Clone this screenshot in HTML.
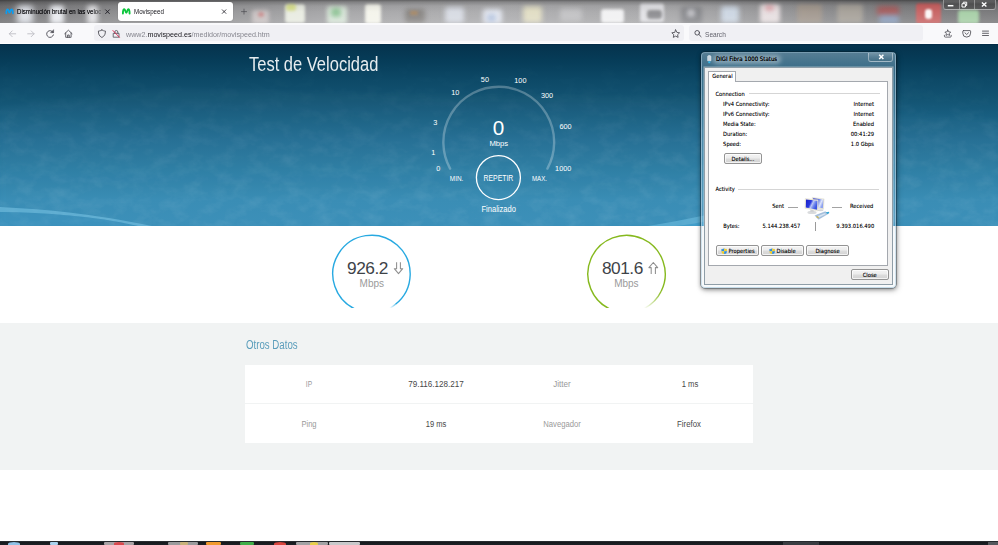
<!DOCTYPE html>
<html lang="es">
<head>
<meta charset="utf-8">
<title>Movispeed</title>
<style>
*{box-sizing:border-box;margin:0;padding:0}
html,body{width:998px;height:545px;overflow:hidden;background:#fff;font-family:"Liberation Sans",sans-serif;}
.abs{position:absolute}
#root{position:relative;width:998px;height:545px;overflow:hidden}
/* ---------- browser chrome ---------- */
#tabbar{position:absolute;left:0;top:0;width:998px;height:23px;
 background:linear-gradient(90deg,#6e6e70 0,#7c7c7e 40px,#8a8a8c 120px,#969698 230px,#a4a4a6 330px,#acacae 500px,#a6a6a8 680px,#949496 780px,#808082 880px,#767678 998px);}
#tabshade{position:absolute;left:0;top:0;width:998px;height:23px;background:linear-gradient(180deg,rgba(0,0,0,.42) 0,rgba(0,0,0,.22) 2px,rgba(0,0,0,.05) 6px,rgba(255,255,255,.04) 12px,rgba(255,255,255,.16) 23px)}
.tab{position:absolute;top:2px;height:19px;border-radius:3px;font-size:7px;line-height:19px;color:#15141a;white-space:nowrap;overflow:hidden}
#tab1{left:3px;width:112px;}
#tab2{left:118px;width:115px;background:#fff;box-shadow:0 0 1px rgba(0,0,0,.35)}
#navbar{position:absolute;left:0;top:23px;width:998px;height:21px;background:#f9f9fb;border-bottom:1.400px solid #fff}
#urlbar{position:absolute;left:94px;top:25px;width:590px;height:16px;border-radius:3px;background:#f0f0f4}
#searchbar{position:absolute;left:689px;top:25px;width:234px;height:16px;border-radius:3px;background:#f0f0f4}
.ct{position:absolute;white-space:nowrap;line-height:11px;transform-origin:0 50%;z-index:3}
#wctl{position:absolute;left:943px;top:0;width:53px;height:9.500px;border:1px solid rgba(255,255,255,.35);border-top:0;border-radius:0 0 3px 3px;background:linear-gradient(180deg,rgba(255,255,255,.12),rgba(40,40,40,.4) 45%,rgba(30,30,30,.35))}
#wctl i{position:absolute;top:0;width:1px;height:8.500px;background:rgba(255,255,255,.35)}
#tabblobs i{position:absolute;border-radius:3px}
#tabblobs{position:absolute;left:0;top:0;width:998px;height:23px;overflow:hidden}
.navtxt{position:absolute;font-size:7px;line-height:16px;white-space:nowrap;color:#15141a}
/* ---------- page ---------- */
#hero{position:absolute;left:0;top:44px;width:998px;height:182px;
 background:linear-gradient(180deg,#05324c 0,#063c58 8.8%,#0d4967 19.8%,#135473 30.8%,#196184 41.8%,#226d93 52.7%,#2e81a8 74.7%,#368bb4 85.7%,#388eb8 100%);overflow:hidden;box-shadow:inset 0 1px 0 #032b47}
#sec1{position:absolute;left:0;top:226px;width:998px;height:97px;background:#fff}
#sec2{position:absolute;left:0;top:323px;width:998px;height:148px;background:#f1f3f3}
#sec3{position:absolute;left:0;top:470.400px;width:998px;height:71px;background:#fff}
#taskbar{position:absolute;left:0;top:541px;width:998px;height:4px;background:linear-gradient(180deg,#3a3d42 0,#15181c 1px,#1d2126 100%);overflow:hidden}
#taskbar i{position:absolute;top:1px;height:3px}
.w{color:#fff;position:absolute;white-space:nowrap;transform:translate(-50%,-50%);line-height:1}
.g{position:absolute;white-space:nowrap;transform:translate(-50%,-50%);line-height:1}
#table{position:absolute;left:245px;top:364.500px;width:507.800px;height:78.500px;background:#fff}
#table .sep{position:absolute;left:0;top:38.700px;width:507.800px;height:1px;background:#f1f3f3}
/* ---------- dialog ---------- */
#dlg{position:absolute;left:701px;top:51.600px;width:195.300px;height:236.900px;border-radius:4px;border:1px solid rgba(185,212,228,.6);
 background:linear-gradient(180deg,rgba(150,190,215,.34) 0,rgba(150,190,215,.30) 168px,rgba(170,200,220,.13) 176px,rgba(170,200,220,.10) 100%);
 box-shadow:0 0 0 .6px rgba(10,25,38,.55),0 1px 4px rgba(0,0,0,.4),1px 2px 6px rgba(0,0,0,.25)}
#dlgsheen{position:absolute;left:702px;top:53px;width:193px;height:13px;border-radius:3px 3px 0 0;background:linear-gradient(180deg,rgba(255,255,255,.16),rgba(255,255,255,.04))}
#client{position:absolute;left:704.400px;top:66.500px;width:188.500px;height:218.400px;background:#f0f0f0;border:1px solid rgba(45,75,95,.5);box-shadow:0 0 0 .7px rgba(255,255,255,.35)}
#tabpage{position:absolute;left:708.100px;top:81.300px;width:180.300px;height:184.500px;background:#fff;border:1px solid #a4a8ae}
#gtab{position:absolute;left:708.100px;top:70.900px;width:27.600px;height:11.400px;background:#fff;border:1px solid #a4a8ae;border-bottom:0}
#closebtn{position:absolute;left:868px;top:52.500px;width:25px;height:9.500px;border:1px solid rgba(255,255,255,.4);border-top:0;border-radius:0 0 3px 3px;background:linear-gradient(180deg,rgba(255,255,255,.18),rgba(255,255,255,.05) 50%,rgba(0,0,0,.05))}
#tglow{position:absolute;left:713px;top:55px;width:68px;height:8.500px;border-radius:5px;background:rgba(255,255,255,.34);filter:blur(2.200px)}
.hl{position:absolute;height:1px;background:#d5d5d5}
.sh{display:inline-block;vertical-align:-1.600px;margin-right:1.300px}
.d{position:absolute;font-family:"DejaVu Sans Condensed","DejaVu Sans","Liberation Sans",sans-serif;font-size:5.750px;line-height:8px;color:#000;white-space:nowrap;text-shadow:0 0 .3px rgba(0,0,0,.4)}
.r{text-align:right}
.btn{position:absolute;height:11px;border:1px solid #949494;text-shadow:0 0 .3px rgba(0,0,0,.4);border-radius:2px;background:linear-gradient(180deg,#f4f4f4 0,#ececec 48%,#dddddd 52%,#d2d2d2 100%);box-shadow:0 0 0 1px rgba(255,255,255,.7) inset;
 font-family:"DejaVu Sans Condensed","DejaVu Sans","Liberation Sans",sans-serif;font-size:5.750px;line-height:11.200px;text-align:center;color:#000;white-space:nowrap}
</style>
</head>
<body>
<div id="root">

<!-- browser chrome -->
<div id="tabbar"></div>
<div id="tabblobs"><i style="left:17px;top:5px;width:16px;height:19px;background:rgba(240,243,250,.85);filter:blur(3px)"></i><i style="left:50px;top:5px;width:14px;height:19px;background:rgba(245,247,252,.9);filter:blur(2.5px)"></i><i style="left:87px;top:5px;width:11px;height:19px;background:rgba(245,245,248,.8);filter:blur(2.5px)"></i><i style="left:252px;top:10px;width:17px;height:14px;background:rgba(215,205,205,.75);filter:blur(2px)"></i><i style="left:258px;top:12px;width:6px;height:5px;background:rgba(200,90,90,.5);filter:blur(1.5px)"></i><i style="left:285px;top:4px;width:20px;height:19px;background:rgba(240,243,232,.9);filter:blur(1.6px)"></i><i style="left:286px;top:4px;width:10px;height:7px;background:rgba(205,215,90,.6);filter:blur(1.5px)"></i><i style="left:327px;top:6px;width:20px;height:18px;background:rgba(225,240,225,.85);filter:blur(2px)"></i><i style="left:331px;top:8px;width:10px;height:9px;background:rgba(90,170,100,.55);filter:blur(2px)"></i><i style="left:365px;top:4px;width:16px;height:20px;background:rgba(248,248,238,.95);filter:blur(1.6px)"></i><i style="left:405px;top:9px;width:20px;height:14px;background:rgba(105,100,95,.55);filter:blur(2.5px)"></i><i style="left:410px;top:11px;width:8px;height:4px;background:rgba(210,140,60,.45);filter:blur(1.5px)"></i><i style="left:445px;top:7px;width:19px;height:16px;background:rgba(225,230,240,.8);filter:blur(2.5px)"></i><i style="left:483px;top:9px;width:19px;height:15px;background:rgba(235,240,250,.85);filter:blur(2.5px)"></i><i style="left:487px;top:14px;width:9px;height:8px;background:rgba(120,150,200,.4);filter:blur(2px)"></i><i style="left:523px;top:6px;width:19px;height:17px;background:rgba(238,232,200,.8);filter:blur(2.5px)"></i><i style="left:560px;top:8px;width:22px;height:13px;background:rgba(215,215,218,.5);filter:blur(2.5px)"></i><i style="left:601px;top:9px;width:23px;height:14px;background:rgba(248,248,250,.9);filter:blur(1.6px)"></i><i style="left:640px;top:3px;width:24px;height:19px;background:rgba(235,235,238,.85);filter:blur(1.6px)"></i><i style="left:647px;top:10px;width:15px;height:9px;background:rgba(70,70,72,.55);filter:blur(1.6px)"></i><i style="left:681px;top:7px;width:21px;height:17px;background:rgba(100,102,108,.5);filter:blur(2.5px)"></i><i style="left:687px;top:9px;width:8px;height:8px;background:rgba(230,230,235,.6);filter:blur(2px)"></i><i style="left:721px;top:6px;width:18px;height:17px;background:rgba(215,228,242,.8);filter:blur(2.5px)"></i><i style="left:760px;top:4px;width:20px;height:19px;background:rgba(245,235,236,.85);filter:blur(2px)"></i><i style="left:765px;top:5px;width:9px;height:6px;background:rgba(215,120,130,.5);filter:blur(2px)"></i><i style="left:797px;top:4px;width:25px;height:19px;background:rgba(165,152,140,.8);filter:blur(2px)"></i><i style="left:837px;top:4px;width:26px;height:19px;background:rgba(172,166,156,.8);filter:blur(2px)"></i><i style="left:877px;top:6px;width:22px;height:10px;background:rgba(190,70,70,.6);filter:blur(2.5px)"></i><i style="left:879px;top:15px;width:20px;height:9px;background:rgba(140,170,215,.65);filter:blur(2.5px)"></i><i style="left:916px;top:3px;width:25px;height:21px;background:rgba(205,95,95,.92);filter:blur(1.3px)"></i><i style="left:925px;top:9px;width:7px;height:10px;background:rgba(255,255,255,.95);filter:blur(1.3px)"></i><i style="left:958px;top:10px;width:21px;height:14px;background:rgba(170,215,170,.9);filter:blur(1.6px)"></i></div>
<div id="tabshade"></div>
<div class="tab" id="tab1"></div>
<div class="tab" id="tab2"></div>
<div class="ct" style="left:16.900px;top:5.500px;font-size:7.200px;transform:scaleX(.85);color:#08080c;text-shadow:0 0 .4px rgba(0,0,0,.55);-webkit-mask-image:linear-gradient(90deg,#000 90%,rgba(0,0,0,.25));mask-image:linear-gradient(90deg,#000 90%,rgba(0,0,0,.25))">Disminución brutal en las veloc</div>
<div class="ct" style="left:133.800px;top:5.500px;font-size:7.200px;transform:scaleX(.86);color:#15141a">Movispeed</div>
<svg class="abs" style="left:0;top:0;z-index:4" width="998" height="45" viewBox="0 0 998 45" fill="none" stroke-linecap="round" stroke-linejoin="round">
 <!-- favicons -->
 <path d="M6.300 13.300 C6.300 10.300 6.900 9.300 7.700 9.300 C8.700 9.300 8.700 12.700 9.600 12.700 C10.500 12.700 10.500 9.300 11.500 9.300 C12.300 9.300 12.900 10.300 12.900 13.300" stroke="#0b9cf0" stroke-width="1.7"/>
 <path d="M122.900 13.600 C122.900 10.300 123.500 9.200 124.400 9.200 C125.400 9.200 125.400 12.900 126.300 12.900 C127.200 12.900 127.200 9.200 128.200 9.200 C129.100 9.200 129.600 10.300 129.600 13.600" stroke="#0cc63c" stroke-width="1.9"/>
 <!-- tab close / new tab -->
 <path d="M105.600 9.800 l3.800 3.800 M109.400 9.800 l-3.800 3.800" stroke="#1c1b22" stroke-width=".9"/>
 <path d="M222.300 9.800 l3.600 3.600 M225.900 9.800 l-3.600 3.600" stroke="#1c1b22" stroke-width=".8"/>
 <path d="M241.500 11.600 h5 M244 9.100 v5" stroke="#4c4c52" stroke-width=".7"/>
 <!-- nav: back, forward -->
 <path d="M15.700 33.800 h-6.300 M12.200 30.900 l-2.900 2.900 l2.900 2.900" stroke="#bdbdc4" stroke-width=".9"/>
 <path d="M27.700 33.800 h6.300 M31.200 30.900 l2.900 2.900 l-2.900 2.900" stroke="#bdbdc4" stroke-width=".9"/>
 <!-- reload -->
 <path d="M53.100 32.400 A3.400 3.400 0 1 0 53.400 34.900" stroke="#4a4a52" stroke-width=".9"/>
 <path d="M53.600 30 v2.700 h-2.700 z" fill="#4a4a52" stroke="#4a4a52" stroke-width=".5"/>
 <!-- home -->
 <path d="M64.700 33.700 l3.700 -3.500 l3.700 3.500 M65.700 33 v4.300 h5.400 V33 M67.600 37.300 v-2.300 h1.600 v2.300" stroke="#4a4a52" stroke-width=".85"/>
 <!-- shield -->
 <path d="M101.900 30 c-1.200 .8 -2.400 1 -3.500 1 c0 3 .6 5 3.500 6.500 c2.900 -1.500 3.500 -3.500 3.500 -6.500 c-1.100 0 -2.300 -.2 -3.500 -1 z" stroke="#4a4a52" stroke-width=".85"/>
 <!-- insecure lock -->
 <path d="M113.600 33.300 h5.400 v3.900 h-5.400 z M114.800 33.300 v-1.300 a1.500 1.500 0 0 1 3 0 v1.300" stroke="#55555d" stroke-width=".85"/>
 <path d="M112.900 30.500 l6.600 6.900" stroke="#e22850" stroke-width=".9"/>
 <!-- star -->
 <path d="M675.700 29.900 l1.200 2.500 l2.700 .4 l-2 1.900 l.5 2.700 l-2.400 -1.300 l-2.400 1.300 l.5 -2.700 l-2 -1.900 l2.700 -.4 z" stroke="#4a4a52" stroke-width=".85"/>
 <!-- magnifier -->
 <circle cx="697.200" cy="32.800" r="2.300" stroke="#4a4a52" stroke-width=".9"/>
 <path d="M698.900 34.500 l2.200 2.200" stroke="#4a4a52" stroke-width=".9"/>
 <!-- save/account -->
 <path d="M947.800 30 l.9 1.800 l2 .3 l-1.400 1.400 l.3 1.900 l-1.800 -.9 l-1.800 .9 l.3 -1.900 l-1.400 -1.400 l2 -.3 z M944.400 35.300 v.9 a.9 .9 0 0 0 .9 .9 h5 a.9 .9 0 0 0 .9 -.9 v-.9" stroke="#4a4a52" stroke-width=".8"/>
 <!-- pocket -->
 <path d="M963.400 30.600 h6.600 a.6 .6 0 0 1 .6 .6 v2 a3.900 3.900 0 0 1 -7.800 0 v-2 a.6 .6 0 0 1 .6 -.6 z M964.900 32.800 l1.800 1.700 l1.800 -1.700" stroke="#4a4a52" stroke-width=".85"/>
 <!-- hamburger -->
 <path d="M982.500 31.100 h6 M982.500 33.300 h6 M982.500 35.500 h6" stroke="#4a4a52" stroke-width=".85"/>
</svg>
<div id="navbar"></div>
<div id="urlbar"></div>
<div id="searchbar"></div>
<div class="ct" style="left:125.800px;top:28.800px;font-size:8px;transform:scaleX(.893);color:#85858e">www2.<span style="color:#15141a">movispeed.es</span>/medidor/movispeed.htm</div>
<div class="ct" style="left:705.300px;top:28.800px;font-size:8px;transform:scaleX(.82);color:#5f5f69">Search</div>
<!-- window controls -->
<div id="wctl"><i style="left:15px"></i><i style="left:29.500px"></i></div>
<svg class="abs" style="left:942px;top:0" width="56" height="10" viewBox="942 0 56 10" fill="none">
 <path d="M947.800 5.700 h5.600" stroke="#fff" stroke-width="1.500"/>
 <path d="M962 3.700 h3.400 v3.300 h-3.400 z M963.300 3.400 v-1.200 h3.400 v3.300 h-1.100" stroke="#fff" stroke-width="1"/>
 <path d="M981.900 2.600 l4.500 4 M986.400 2.600 l-4.500 4" stroke="#fff" stroke-width="1.400"/>
</svg>

<!-- page -->
<div id="hero"><svg width="998" height="182" viewBox="0 0 998 182" style="position:absolute;left:0;top:0">
 <defs>
  <filter id="tx" x="0" y="0" width="100%" height="100%"><feTurbulence type="fractalNoise" baseFrequency=".06 .09" numOctaves="4" seed="7" result="n"/><feColorMatrix type="matrix" values="0 0 0 0 1  0 0 0 0 1  0 0 0 0 1  1.6 0 0 0 -.62"/></filter>
  <linearGradient id="fade" x1="0" y1="0" x2="0" y2="1"><stop offset="0" stop-color="#fff" stop-opacity="0"/><stop offset=".25" stop-color="#fff" stop-opacity=".25"/><stop offset=".6" stop-color="#fff" stop-opacity=".8"/><stop offset="1" stop-color="#fff" stop-opacity="1"/></linearGradient>
  <filter id="b2" x="-5%" y="-20%" width="110%" height="140%"><feGaussianBlur stdDeviation="2.500"/></filter>
  <mask id="mk"><rect width="998" height="182" fill="url(#fade)"/></mask>
 </defs>
 <path d="M0 64 L60 57 L120 50 L165 44 L230 46 L300 48 L380 50 L470 52 L560 52 L700 54 L800 60 L880 70 L998 75 V182 H0 Z" fill="#fff" opacity=".018" filter="url(#b2)"/>
 <g mask="url(#mk)"><rect width="998" height="182" filter="url(#tx)" opacity=".10"/></g>
 <path d="M0 163 C42 165 92 169.500 152 182 L138 182 C94 171.800 45 168.600 0 168 Z" fill="#7cc6e8" opacity=".55"/>
 <path d="M0 168 C45 168.600 94 171.800 138 182 L0 182 Z" fill="#3f9ccb" opacity=".22"/>
 <path d="M648 182 C668 178.500 686 175.500 704 171.500 L704 182 Z" fill="#6fbfe2" opacity=".55"/>
 <path d="M676 182 C688 180.500 696 179.500 704 177.500 L704 182 Z" fill="#3c9bc8" opacity=".8"/>
</svg></div>
<div id="sec1"></div>
<div id="sec2"></div>
<div id="sec3"></div>
<div id="taskbar"><i style="left:8px;width:12px;background:#8fc1e6;border-radius:50% 50% 0 0"></i><i style="left:50px;width:8px;background:#a9d2ee;border-radius:1px"></i><i style="left:104px;width:30px;background:#a9a3a6;border-radius:1px"></i><i style="left:114px;width:10px;background:#d9484d;border-radius:50% 50% 0 0"></i><i style="left:168px;width:30px;background:#9b9b9d;border-radius:1px"></i><i style="left:180px;width:8px;background:#c9b27a;border-radius:1px"></i><i style="left:206px;width:15px;background:#f29a2e;border-radius:1px"></i><i style="left:240px;width:14px;background:#3fae49;border-radius:1px"></i><i style="left:274px;width:12px;background:#d8453e;border-radius:50% 50% 0 0"></i><i style="left:296px;width:32px;background:#a3a3a5;border-radius:1px"></i><i style="left:310px;width:8px;background:#e8cf4a;border-radius:50% 50% 0 0"></i><i style="left:329px;width:31px;background:#c9c9cb;border-radius:1px"></i><i style="left:783px;width:36px;background:#3a3d42;border-radius:0"></i><i style="left:988px;width:10px;background:#55585d;border-radius:0"></i></div>

<div class="abs" style="left:249px;top:52.600px;font-size:19.600px;line-height:22px;color:rgba(255,255,255,.9);white-space:nowrap;transform-origin:0 0;transform:scaleX(.842)">Test de Velocidad</div>

<div id="table"><div class="sep"></div></div>


<!-- hero content -->
<svg class="abs" style="left:420px;top:60px" width="170" height="165" viewBox="420 60 170 165">
 <path d="M450.100 168.600 A55.400 55.400 0 1 1 547.400 168.600" fill="none" stroke="rgba(255,255,255,.27)" stroke-width="2.400" stroke-linecap="round"/>
 <circle cx="498.400" cy="177.600" r="22" fill="none" stroke="#fff" stroke-width="1.300"/>
 <g fill="#fff" font-family="Liberation Sans, sans-serif" text-anchor="middle">
  <text x="498.500" y="135" font-size="20.700">0</text>
  <text x="498.800" y="146" font-size="7.700">Mbps</text>
  <text x="498.400" y="181" font-size="8.200" textLength="29.800" lengthAdjust="spacingAndGlyphs">REPETIR</text>
  <text x="498.700" y="211.700" font-size="8.200" textLength="34.500" lengthAdjust="spacingAndGlyphs">Finalizado</text>
  <text x="456.600" y="180.800" font-size="7" textLength="13.500" lengthAdjust="spacingAndGlyphs">MIN.</text>
  <text x="539.500" y="180.800" font-size="7" textLength="15" lengthAdjust="spacingAndGlyphs">MAX.</text>
  <g font-size="7.300">
   <text x="438.300" y="170.900">0</text>
   <text x="433.300" y="154.800">1</text>
   <text x="435.400" y="124.900">3</text>
   <text x="455.300" y="94.600">10</text>
   <text x="484.900" y="82.200">50</text>
   <text x="520.400" y="82.600">100</text>
   <text x="547" y="97.600">300</text>
   <text x="565.500" y="129.200">600</text>
   <text x="563.200" y="170.600">1000</text>
  </g>
 </g>
</svg>

<!-- result circles -->
<svg class="abs" style="left:320px;top:226px" width="380" height="81.500" viewBox="320 226 380 81.500" fill="none">
 <defs>
  <linearGradient id="gf" gradientUnits="userSpaceOnUse" x1="662" y1="292" x2="645" y2="308"><stop offset="0" stop-color="#86b91e"/><stop offset="1" stop-color="#86b91e" stop-opacity=".05"/></linearGradient>
  <linearGradient id="bf" gradientUnits="userSpaceOnUse" x1="398" y1="302" x2="391" y2="308"><stop offset="0" stop-color="#27a9e1"/><stop offset="1" stop-color="#27a9e1" stop-opacity=".1"/></linearGradient>
 </defs>
 <path d="M395.500 304.300 A38.700 38.700 0 1 0 357.400 310" stroke="#27a9e1" stroke-width="1.400"/>
 <path d="M395.500 304.300 A38.700 38.700 0 0 1 390 308" stroke="url(#bf)" stroke-width="1.400"/>
 <path d="M661.200 291.200 A38.700 38.700 0 1 0 612.200 310" stroke="#86b91e" stroke-width="1.400"/>
 <path d="M661.200 291.200 A38.700 38.700 0 0 1 644 308.500" stroke="url(#gf)" stroke-width="1.400"/>
 <path d="M396.600 262.300 V268.700 H394.300 L398.500 273.700 L402.700 268.700 H400.400 V262.300" stroke="#8e8e8e" stroke-width="1.050" stroke-linejoin="round"/>
 <path d="M651.200 274 V267.600 H648.900 L653.300 262.500 L657.700 267.600 H655.400 V274" stroke="#8e8e8e" stroke-width="1.050" stroke-linejoin="round"/>
</svg>
<div class="g" style="left:367.500px;top:269.400px;font-size:17.300px;color:#3e4348;letter-spacing:-.45px">926.2</div>
<div class="g" style="left:371.800px;top:284.200px;font-size:10px;color:#9a9a9a">Mbps</div>
<div class="g" style="left:622.400px;top:269.400px;font-size:17.300px;color:#3e4348;letter-spacing:-.45px">801.6</div>
<div class="g" style="left:626.400px;top:284.200px;font-size:10px;color:#9a9a9a">Mbps</div>

<!-- otros datos -->
<div class="abs" style="left:246.300px;top:337.800px;font-size:12.500px;line-height:15px;color:#5a9dbb;white-space:nowrap;transform-origin:0 0;transform:scaleX(.774)">Otros Datos</div>
<div class="g" style="left:308.7px;top:384.3px;font-size:8.900px;color:#9a9a9a;transform:translate(-50%,-50%) scaleX(0.751)">IP</div>
<div class="g" style="left:435.9px;top:384.3px;font-size:8.900px;color:#474747;transform:translate(-50%,-50%) scaleX(0.912)">79.116.128.217</div>
<div class="g" style="left:562.3px;top:384.3px;font-size:8.900px;color:#9a9a9a;transform:translate(-50%,-50%) scaleX(0.910)">Jitter</div>
<div class="g" style="left:689.5px;top:384.3px;font-size:8.900px;color:#474747;transform:translate(-50%,-50%) scaleX(0.863)">1 ms</div>
<div class="g" style="left:308.9px;top:423.7px;font-size:8.900px;color:#9a9a9a;transform:translate(-50%,-50%) scaleX(0.855)">Ping</div>
<div class="g" style="left:435.9px;top:423.7px;font-size:8.900px;color:#474747;transform:translate(-50%,-50%) scaleX(0.852)">19 ms</div>
<div class="g" style="left:562.4px;top:423.7px;font-size:8.900px;color:#9a9a9a;transform:translate(-50%,-50%) scaleX(0.864)">Navegador</div>
<div class="g" style="left:689.2px;top:423.7px;font-size:8.900px;color:#474747;transform:translate(-50%,-50%) scaleX(0.877)">Firefox</div>

<!-- dialog -->
<div id="dlg"></div>
<div id="dlgsheen"></div>
<div id="tglow"></div>
<div id="client"></div>
<div id="tabpage"></div>
<div id="gtab"></div>
<div id="closebtn"></div>
<svg class="abs" style="left:700px;top:50px" width="200" height="20" viewBox="700 50 200 20" fill="none">
 <path d="M879.200 54.800 l4.200 4.200 M883.400 54.800 l-4.200 4.200" stroke="#fff" stroke-width="1.500"/>
 <path d="M707.600 56.200 h3.400 v4.600 h-3.400 z" fill="#c9d6e0" stroke="#e8eef3" stroke-width=".5"/>
 <path d="M708.200 55.300 h2.200 v1 h-2.200 z" fill="#dfe7ee"/>
 <path d="M708.300 61.300 h2 v1.900 h-2 z" fill="#35b6e8"/>
</svg>
<div class="d" style="left:716px;top:55.200px;font-size:6.050px;color:#000;text-shadow:0 0 .4px rgba(0,0,0,.8)">DIGI Fibra 1000 Status</div>
<div class="d" style="left:712.200px;top:72.300px">General</div>
<div class="d" style="left:715.400px;top:89.800px">Connection</div>
<div class="hl" style="left:748.500px;top:93.300px;width:131px"></div>
<div class="d" style="left:723.100px;top:99.7px">IPv4 Connectivity:</div><div class="d r" style="right:124px;top:99.7px">Internet</div>
<div class="d" style="left:723.100px;top:109.9px">IPv6 Connectivity:</div><div class="d r" style="right:124px;top:109.9px">Internet</div>
<div class="d" style="left:723.100px;top:120px">Media State:</div><div class="d r" style="right:124px;top:120px">Enabled</div>
<div class="d" style="left:723.100px;top:130.1px">Duration:</div><div class="d r" style="right:124px;top:130.1px">00:41:29</div>
<div class="d" style="left:723.100px;top:140.3px">Speed:</div><div class="d r" style="right:124px;top:140.3px">1.0 Gbps</div>
<div class="btn" style="left:724.200px;top:153.300px;width:37.500px">Details...</div>
<div class="d" style="left:715.500px;top:185px">Activity</div>
<div class="hl" style="left:738.200px;top:188.800px;width:141.300px"></div>
<div class="d" style="left:772.300px;top:202.200px">Sent</div>
<div class="hl" style="left:787.800px;top:206.500px;width:10px;height:1.500px;background:#a3a3a3"></div>
<div class="hl" style="left:832px;top:206.500px;width:10px;height:1.500px;background:#a3a3a3"></div>
<div class="d" style="left:849.900px;top:202.200px">Received</div>
<svg class="abs" style="left:803px;top:196px" width="30" height="26" viewBox="803 196 30 26">
 <defs>
  <linearGradient id="scr" x1="0" y1="0" x2="1" y2=".45"><stop offset="0" stop-color="#1b1fc8"/><stop offset=".45" stop-color="#2a3adf"/><stop offset=".62" stop-color="#b9c6f6"/><stop offset=".8" stop-color="#6f86ee"/><stop offset="1" stop-color="#3b55e0"/></linearGradient>
  <linearGradient id="scr2" x1="0" y1="0" x2="1" y2=".45"><stop offset="0" stop-color="#2229cc"/><stop offset=".5" stop-color="#5f78ea"/><stop offset=".8" stop-color="#dfe6fb"/><stop offset="1" stop-color="#8ea2f0"/></linearGradient>
 </defs>
 <path d="M812.300 197.400 L824.100 198.900 L823.500 209.300 L812.800 207.600 Z" fill="#e9e6d6" stroke="#c9c6b6" stroke-width=".3"/>
 <path d="M813.100 198.300 L823.400 199.600 L822.900 208.300 L813.400 206.800 Z" fill="url(#scr2)"/>
 <ellipse cx="812" cy="212.400" rx="4.600" ry="1.700" fill="#d9dbdd"/>
 <path d="M810.300 209.500 L813.800 210.200 L813.600 212.200 L810.400 212 Z" fill="#cfd1d4"/>
 <ellipse cx="820.500" cy="210.300" rx="3" ry="1" fill="#d5d7da"/>
 <path d="M805.200 198.600 L818.200 199.800 L817.900 211 L804.900 208.300 Z" fill="#efecdc" stroke="#cfcbb8" stroke-width=".3"/>
 <path d="M806 199.600 L817.400 200.700 L817.100 209.800 L805.800 207.500 Z" fill="url(#scr)"/>
 <path d="M815.100 215.600 L825.200 211.700 L828.300 213.600 L818.500 219.300 Z" fill="#a9c3df" stroke="#7a9cc4" stroke-width=".4"/>
 <path d="M816.800 216.400 L824.800 213.200 L826 214 L818.300 217.700 Z" fill="#d7e3f1"/>
 <path d="M815.700 216.800 L817.800 216 L819 217.800 L818.400 218.600 Z" fill="#c9b45a"/>
 <path d="M825.800 212.600 L828.800 211.800 L829.300 213 L827.500 213.900 Z" fill="#2ba3d3"/>
</svg>
<div class="d" style="left:723.200px;top:222.200px">Bytes:</div>
<div class="d" style="left:762.500px;top:222.200px">5.144.238.457</div>
<div class="abs" style="left:814.600px;top:222.400px;width:1px;height:8.400px;background:#9a9a9a"></div>
<div class="d r" style="right:123.800px;top:222.200px">9.393.016.490</div>
<div class="btn" style="left:716px;top:244.800px;width:42.800px;padding-left:.8px"><svg class="sh" width="6.400" height="6.800" viewBox="0 0 6.400 6.800"><path d="M3.200 .2 C2.200 .9 1.200 1.100 .3 1.100 V3.300 H3.200 Z" fill="#2b8de0"/><path d="M3.200 .2 C4.200 .9 5.200 1.100 6.100 1.100 V3.300 H3.200 Z" fill="#f4cf23"/><path d="M.3 3.300 C.4 5 1.500 6 3.200 6.600 V3.300 Z" fill="#f4cf23"/><path d="M6.100 3.300 C6 5 4.900 6 3.200 6.600 V3.300 Z" fill="#2b8de0"/><path d="M3.200 .2 C2.200 .9 1.200 1.100 .3 1.100 V3.300 C.4 5 1.500 6 3.200 6.600 C4.900 6 6 5 6.100 3.300 V1.100 C5.200 1.100 4.200 .9 3.200 .2 Z" fill="none" stroke="#c9ccd2" stroke-width=".35"/></svg>Properties</div>
<div class="btn" style="left:761px;top:244.800px;width:42.500px"><svg class="sh" width="6.400" height="6.800" viewBox="0 0 6.400 6.800"><path d="M3.200 .2 C2.200 .9 1.200 1.100 .3 1.100 V3.300 H3.200 Z" fill="#2b8de0"/><path d="M3.200 .2 C4.200 .9 5.200 1.100 6.100 1.100 V3.300 H3.200 Z" fill="#f4cf23"/><path d="M.3 3.300 C.4 5 1.500 6 3.200 6.600 V3.300 Z" fill="#f4cf23"/><path d="M6.100 3.300 C6 5 4.900 6 3.200 6.600 V3.300 Z" fill="#2b8de0"/><path d="M3.200 .2 C2.200 .9 1.200 1.100 .3 1.100 V3.300 C.4 5 1.500 6 3.200 6.600 C4.900 6 6 5 6.100 3.300 V1.100 C5.200 1.100 4.200 .9 3.200 .2 Z" fill="none" stroke="#c9ccd2" stroke-width=".35"/></svg>Disable</div>
<div class="btn" style="left:806.400px;top:244.800px;width:42.200px">Diagnose</div>
<div class="btn" style="left:851px;top:269.400px;width:37.500px">Close</div>

</div>
</body>
</html>
